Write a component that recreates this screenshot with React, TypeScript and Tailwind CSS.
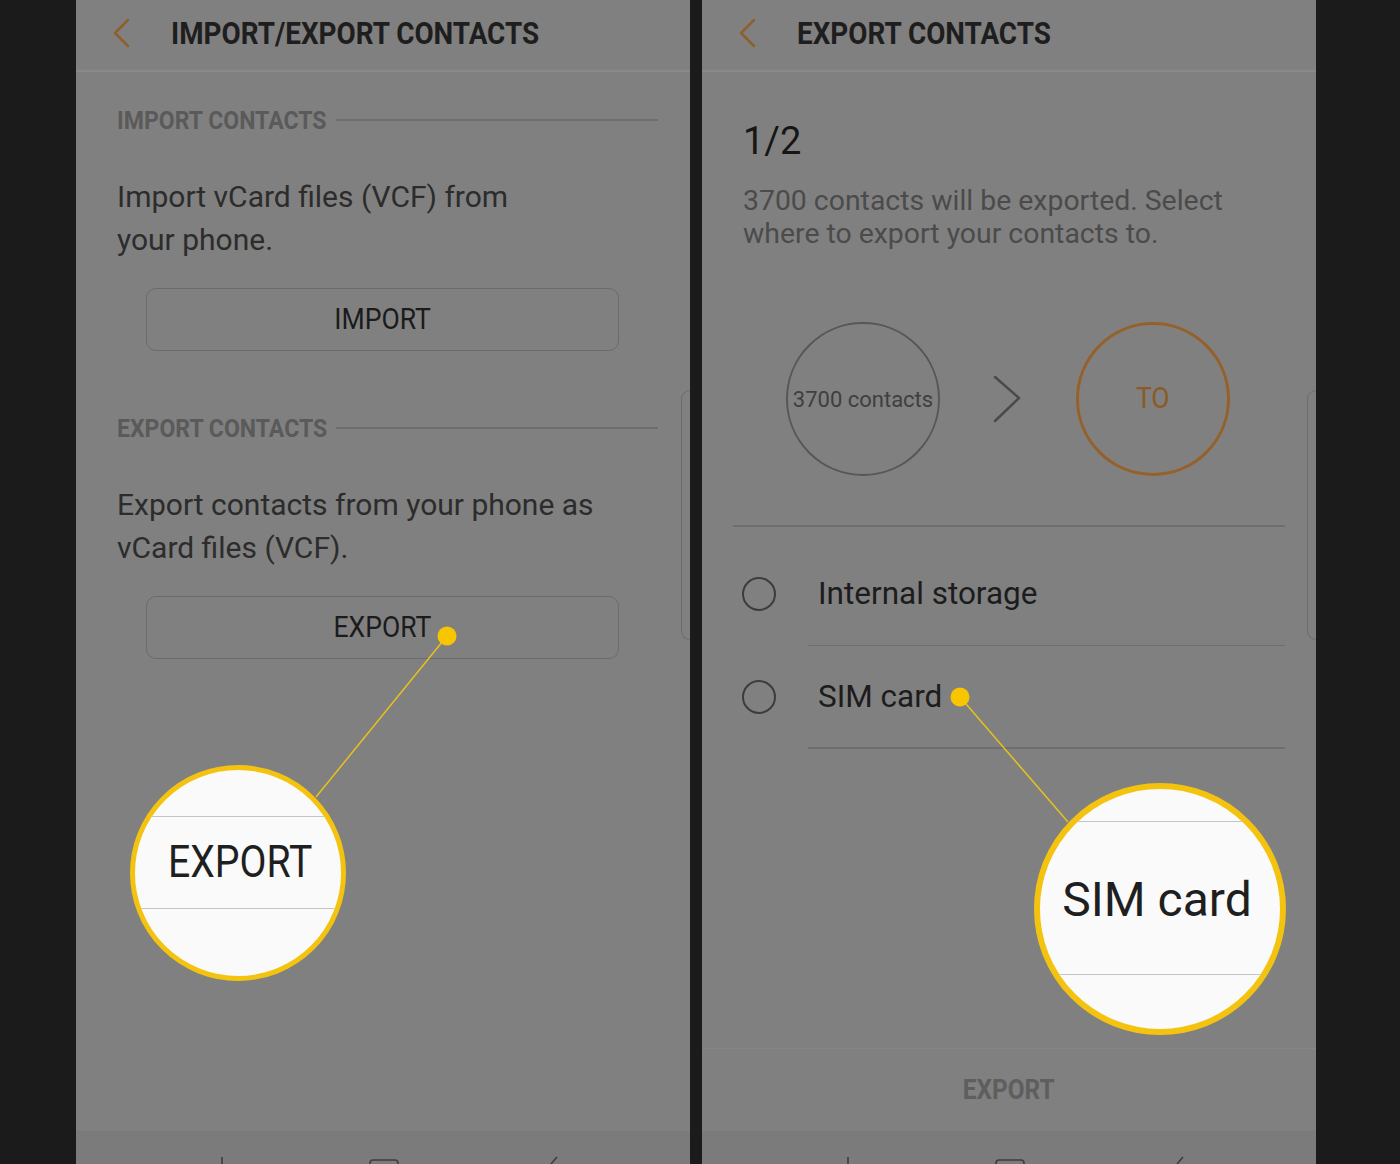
import React from "react";

// Roboto squeezed horizontally stands in for the condensed system face
const COND = "font-['Roboto',sans-serif] inline-block scale-x-[0.9]";
const COND_BOLD = "font-['Roboto',sans-serif] font-bold inline-block scale-x-[0.87]";
const SANS = "font-['Roboto',sans-serif]";

function BackChevron() {
  return (
    <svg width="18" height="30" viewBox="0 0 18 30" className="shrink-0">
      <polyline
        points="15,2 2,15 15,28"
        fill="none"
        stroke="#8e5f2d"
        strokeWidth="2.5"
        strokeLinecap="round"
        strokeLinejoin="round"
      />
    </svg>
  );
}

function Header({ title }: { title: string }) {
  return (
    <div className="h-[72px] shrink-0 border-b-2 border-[#898989] pb-[4px] flex items-center">
      <div className="ml-[37px]">
        <BackChevron />
      </div>
      <h1 className={`ml-[40px] ${COND_BOLD} origin-left text-[32px] leading-none text-[#1e1e1e] whitespace-nowrap`}>
        {title}
      </h1>
    </div>
  );
}

function SectionLabel({ text, className = "" }: { text: string; className?: string }) {
  return (
    <div className={`flex items-center h-[28px] ${className}`}>
      <div className="w-[219px] shrink-0">
        <span className={`${COND_BOLD} origin-left text-[26.5px] leading-[28px] text-[#5a5a5a] whitespace-nowrap`}>
          {text}
        </span>
      </div>
      <div className="flex-1 h-[1.5px] bg-[#6d6d6d]" />
    </div>
  );
}

function OutlineButton({ label }: { label: string }) {
  return (
    <div className="ml-[29px] mt-[27px] w-[473px] h-[63px] rounded-[10px] border-[1.5px] border-[#6b6b6b] flex items-center justify-center">
      <span className={`${COND} text-[29.5px] leading-none text-[#1b1b1b]`}>{label}</span>
    </div>
  );
}

function NavBar() {
  return (
    <div className="h-[33px] shrink-0 bg-[#7b7b7b] overflow-hidden">
      <svg width="614" height="33" viewBox="0 0 614 33">
        {/* recents */}
        <line x1="146" y1="26" x2="146" y2="33" stroke="#3d3d3d" strokeWidth="1.6" />
        {/* home */}
        <path d="M294 33 V32 Q294 29 297 29 H319 Q322 29 322 32 V33" fill="none" stroke="#3d3d3d" strokeWidth="1.6" />
        {/* back */}
        <line x1="481" y1="26" x2="475" y2="33" stroke="#3d3d3d" strokeWidth="1.6" />
      </svg>
    </div>
  );
}

function EdgeHandle() {
  return (
    <div className="absolute right-0 top-[390px] w-[9px] h-[250px] rounded-l-[12px] border border-r-0 border-[#6c6c6c]" />
  );
}

function RadioRow({ label }: { label: string }) {
  return (
    <>
      <div className="h-[101px] flex items-center">
        <div className="ml-[40px] w-[34px] h-[34px] rounded-full border-2 border-[#3c3c3c] shrink-0" />
        <span className={`ml-[42px] ${SANS} text-[31.5px] leading-none text-[#1c1c1c] whitespace-nowrap`}>{label}</span>
      </div>
      <div className="ml-[106px] w-[477px] h-[1.5px] bg-[#6e6e6e]" />
    </>
  );
}

function ImportExportScreen() {
  return (
    <div className="relative w-[614px] h-[1164px] shrink-0 bg-[#808080] flex flex-col">
      <Header title="IMPORT/EXPORT CONTACTS" />
      <div className="flex-1 flex flex-col pl-[41px] pr-[32px]">
        <SectionLabel text="IMPORT CONTACTS" className="mt-[34px]" />
        <p className={`mt-[41px] ${SANS} text-[30px] leading-[43px] text-[#2c2c2c] whitespace-nowrap`}>
          Import vCard files (VCF) from
          <br />
          your phone.
        </p>
        <OutlineButton label="IMPORT" />
        <SectionLabel text="EXPORT CONTACTS" className="mt-[63px]" />
        <p className={`mt-[41px] ${SANS} text-[30px] leading-[43px] text-[#2c2c2c] whitespace-nowrap`}>
          Export contacts from your phone as
          <br />
          vCard files (VCF).
        </p>
        <OutlineButton label="EXPORT" />
      </div>
      <NavBar />
      <EdgeHandle />

      {/* callout pointer */}
      <svg className="absolute inset-0 pointer-events-none" width="614" height="1164" viewBox="0 0 614 1164">
        <line x1="371" y1="636" x2="240" y2="797" stroke="#e6c21c" strokeWidth="1.5" />
      </svg>
      <div className="absolute left-[54px] top-[765px] w-[216px] h-[216px] rounded-full border-[5px] border-[#f3c30f] bg-[#fafafa] overflow-hidden">
        <div className="h-[46px]" />
        <div className="h-[93px] border-y border-[#c4c4c4] flex items-center justify-center">
          <span className={`${COND} text-[43.5px] leading-none text-[#1f1f1f] ml-[4px]`}>EXPORT</span>
        </div>
      </div>
      <svg className="absolute inset-0 pointer-events-none" width="614" height="1164" viewBox="0 0 614 1164">
        <circle cx="371" cy="636" r="9.5" fill="#f7c600" />
      </svg>
    </div>
  );
}

function ExportScreen() {
  return (
    <div className="relative w-[614px] h-[1164px] shrink-0 bg-[#808080] flex flex-col">
      <Header title="EXPORT CONTACTS" />
      <div className="flex-1 flex flex-col">
        <div className={`mt-[47px] ml-[41px] ${SANS} text-[38px] leading-[44px] text-[#161616]`}>1/2</div>
        <p className={`mt-[21px] ml-[41px] ${SANS} text-[28.4px] leading-[33px] text-[#4b4b4b] whitespace-nowrap`}>
          3700 contacts will be exported. Select
          <br />
          where to export your contacts to.
        </p>
        <div className="mt-[72px] h-[154px] flex items-center">
          <div
            className={`ml-[84px] w-[154px] h-[154px] shrink-0 rounded-full border-2 border-[#575757] flex items-center justify-center ${SANS} text-[22px] text-[#3f3f3f] whitespace-nowrap`}
          >
            3700 contacts
          </div>
          <svg className="ml-[52px] shrink-0" width="30" height="48" viewBox="0 0 30 48">
            <polyline points="3,2 27,23 3,46" fill="none" stroke="#4a4a4a" strokeWidth="2.5" strokeLinecap="round" strokeLinejoin="round" />
          </svg>
          <div className="ml-[54px] w-[154px] h-[154px] shrink-0 rounded-full border-[3px] border-[#95602a] flex items-center justify-center">
            <span className={`${COND} text-[29.5px] leading-none text-[#8b5a25]`}>TO</span>
          </div>
        </div>
        <div className="mt-[49px] ml-[31px] w-[552px] h-[1.5px] bg-[#6e6e6e]" />
        <div className="h-[17px]" />
        <RadioRow label="Internal storage" />
        <RadioRow label="SIM card" />
        <div className="flex-1" />
        <div className="h-[83px] border-t border-[#868686] flex items-center justify-center">
          <span className={`${COND_BOLD} text-[28px] leading-none text-[#5e5e5e]`}>EXPORT</span>
        </div>
      </div>
      <NavBar />
      <EdgeHandle />

      {/* callout pointer */}
      <svg className="absolute inset-0 pointer-events-none" width="614" height="1164" viewBox="0 0 614 1164">
        <line x1="258" y1="697" x2="366" y2="822" stroke="#e6c21c" strokeWidth="1.5" />
      </svg>
      <div className="absolute left-[332px] top-[783px] w-[252px] h-[252px] rounded-full border-[6px] border-[#f3c30f] bg-[#fafafa] overflow-hidden">
        <div className="h-[32px]" />
        <div className="h-[154px] border-y border-[#c4c4c4] flex items-center justify-center">
          <span className={`${SANS} text-[48px] leading-none text-[#1f1f1f] ml-[-6px] mt-[4px]`}>SIM card</span>
        </div>
      </div>
      <svg className="absolute inset-0 pointer-events-none" width="614" height="1164" viewBox="0 0 614 1164">
        <circle cx="258" cy="697" r="9.5" fill="#f7c600" />
      </svg>
    </div>
  );
}

export default function App() {
  return (
    <div className="w-[1400px] h-[1164px] bg-[#1b1b1b] flex overflow-hidden">
      <div className="ml-[76px]">
        <ImportExportScreen />
      </div>
      <div className="ml-[12px]">
        <ExportScreen />
      </div>
    </div>
  );
}
